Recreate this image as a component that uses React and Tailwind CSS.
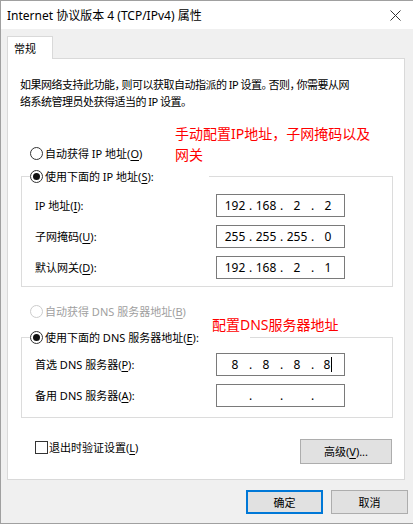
import React from 'react';

const Mn = ({ c }) => <span className="underline underline-offset-[2px]">{c}</span>;
// narrower CJK punctuation, as the dialog font draws it
const P = ({ c }) => <span className="tracking-[-4px]">{c}</span>;

function Radio({ checked, disabled }) {
    return (
        <span className={`w-[13px] h-[13px] rounded-full border bg-white flex items-center justify-center shrink-0 ${disabled ? 'border-[#cccccc]' : 'border-[#333333]'}`}>
            {checked && <span className="w-[7px] h-[7px] rounded-full bg-[#111111]" />}
        </span>
    );
}

function IpBox({ parts, caret }) {
    return (
        <div className="w-[129px] h-[23px] border border-[#7a7a7a] bg-white flex items-center pl-[6px] text-[12px]">
            {parts.map((p, i) => (
                <React.Fragment key={i}>
                    <span className="w-[24px] flex justify-center items-center">
                        {p}
                        {caret && i === 3 && <span className="w-px h-[15px] bg-black ml-px" />}
                    </span>
                    {i < 3 && <span className="w-[7px] text-center">.</span>}
                </React.Fragment>
            ))}
        </div>
    );
}

function Row({ label, parts, caret }) {
    return (
        <div className="flex items-center h-[23px]">
            <div className="w-[181px]">{label}</div>
            <IpBox parts={parts} caret={caret} />
        </div>
    );
}

export default function App() {
    return (
        <div className="w-[413px] h-[526px] bg-white font-[Noto_Sans,Noto_Sans_CJK_SC,sans-serif] text-[11px] text-black leading-[17px]">
            <div className="h-[524px] border-l border-t border-b border-[#a0a0a0] flex flex-col">
                {/* Title bar */}
                <div className="h-[28px] bg-white flex items-center justify-between pl-[6px] pr-[12px]">
                    <span className="text-[12px]">Internet 协议版本 4 (TCP/IPv4) 属性</span>
                    <svg width="11" height="11" viewBox="0 0 11 11" className="text-[#333333]">
                        <path d="M0.5 0.5 L10.5 10.5 M10.5 0.5 L0.5 10.5" stroke="currentColor" strokeWidth="1" />
                    </svg>
                </div>

                <div className="flex-1 bg-[#f0f0f0] pl-[6px] pt-[7px]">
                    {/* Tab */}
                    <div className="relative z-10 w-[46px] h-[23px] mb-[-1px] bg-white border border-b-0 border-[#d9d9d9] pl-[6px] pt-[3px]">
                        常规
                    </div>

                    {/* Panel */}
                    <div className="relative w-[398px] h-[422px] bg-white border border-[#d9d9d9] flex flex-col">
                        <p className="pt-[17px] pl-[12px] pr-[10px] tracking-[-0.5px]">
                            如果网络支持此功能<P c="，" />则可以获取自动指派的 IP 设置<P c="。" />否则<P c="，" />你需要从网
                            <br />
                            络系统管理员处获得适当的 IP 设置。
                        </p>

                        <div className="mt-[35px] ml-[22px] flex items-center gap-[2px] h-[17px]">
                            <Radio />
                            <span>自动获得 IP 地址(<Mn c="O" />)</span>
                        </div>

                        <fieldset className="mt-[6px] ml-[13px] w-[372px] border border-[#dcdcdc]">
                            <legend className="ml-[8px] w-[179px]">
                                <span className="flex items-center gap-[2px] h-[17px]">
                                    <Radio checked />
                                    <span>使用下面的 IP 地址(<Mn c="S" />):</span>
                                </span>
                            </legend>
                            <div className="pt-[9px] pb-[7px] pl-[13px] flex flex-col gap-[8px]">
                                <Row label={<>IP 地址(<Mn c="I" />):</>} parts={['192', '168', '2', '2']} />
                                <Row label={<>子网掩码(<Mn c="U" />):</>} parts={['255', '255', '255', '0']} />
                                <Row label={<>默认网关(<Mn c="D" />):</>} parts={['192', '168', '2', '1']} />
                            </div>
                        </fieldset>

                        <div className="mt-[16px] ml-[22px] flex items-center gap-[2px] h-[17px] text-[#a0a0a0]">
                            <Radio disabled />
                            <span>自动获得 DNS 服务器地址(<Mn c="B" />)</span>
                        </div>

                        <fieldset className="mt-[9px] ml-[13px] w-[372px] border border-[#dcdcdc]">
                            <legend className="ml-[8px] w-[220px]">
                                <span className="flex items-center gap-[2px] h-[17px]">
                                    <Radio checked />
                                    <span>使用下面的 DNS 服务器地址(<Mn c="E" />):</span>
                                </span>
                            </legend>
                            <div className="pt-[7px] pb-[10px] pl-[13px] flex flex-col gap-[8px]">
                                <Row label={<>首选 DNS 服务器(<Mn c="P" />):</>} parts={['8', '8', '8', '8']} caret />
                                <Row label={<>备用 DNS 服务器(<Mn c="A" />):</>} parts={['', '', '', '']} />
                            </div>
                        </fieldset>

                        <div className="mt-[21px] pl-[27px] pr-[12px] flex items-start justify-between">
                            <div className="flex items-center gap-[1px] h-[17px]">
                                <span className="w-[13px] h-[13px] border border-[#333333] bg-white" />
                                <span>退出时验证设置(<Mn c="L" />)</span>
                            </div>
                            <button className="w-[92px] h-[25px] bg-[#e1e1e1] border border-[#adadad] flex items-center justify-center">
                                高级(<Mn c="V" />)...
                            </button>
                        </div>

                        {/* Annotations */}
                        <div className="absolute left-[167px] top-[64px] text-[14px] leading-[21px] text-[#ff0000]">
                            手动配置IP地址，子网掩码以及
                            <br />
                            网关
                        </div>
                        <div className="absolute left-[204px] top-[255px] text-[14px] leading-[21px] text-[#ff0000]">
                            配置DNS服务器地址
                        </div>
                    </div>

                    {/* Dialog buttons */}
                    <div className="mt-[10px] pr-[5px] flex justify-end gap-[8px]">
                        <button className="w-[77px] h-[24px] bg-[#e1e1e1] border-2 border-[#0078d7] flex items-center justify-center">
                            确定
                        </button>
                        <button className="w-[77px] h-[24px] bg-[#e1e1e1] border border-[#adadad] flex items-center justify-center">
                            取消
                        </button>
                    </div>
                </div>
            </div>
        </div>
    );
}
